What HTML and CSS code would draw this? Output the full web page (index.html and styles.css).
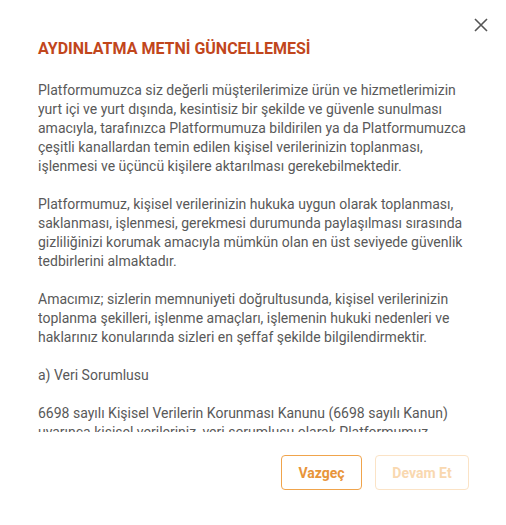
FILE: index.html
```html
<!DOCTYPE html>
<html lang="tr">
<head>
<meta charset="utf-8">
<title>Aydınlatma Metni</title>
<link rel="stylesheet" href="styles.css">
</head>
<body>
<div class="modal">
  <div class="modal-top">
    <button class="close" aria-label="Kapat">
      <svg width="14" height="14" viewBox="0 0 14 14"><path d="M1 1L13 13M13 1L1 13" stroke="#555" stroke-width="1.6" fill="none"/></svg>
    </button>
  </div>
  <h1 class="title">AYDINLATMA METNİ GÜNCELLEMESİ</h1>
  <div class="content">
    <p>Platformumuzca siz değerli müşterilerimize ürün ve hizmetlerimizin yurt içi ve yurt dışında, kesintisiz bir şekilde ve güvenle sunulması amacıyla, tarafınızca Platformumuza bildirilen ya da Platformumuzca çeşitli kanallardan temin edilen kişisel verilerinizin toplanması, işlenmesi ve üçüncü kişilere aktarılması gerekebilmektedir.</p>
    <p>Platformumuz, kişisel verilerinizin hukuka uygun olarak toplanması, saklanması, işlenmesi, gerekmesi durumunda paylaşılması sırasında gizliliğinizi korumak amacıyla mümkün olan en üst seviyede güvenlik tedbirlerini almaktadır.</p>
    <p>Amacımız; sizlerin memnuniyeti doğrultusunda, kişisel verilerinizin toplanma şekilleri, işlenme amaçları, işlemenin hukuki nedenleri ve haklarınız konularında sizleri en şeffaf şekilde bilgilendirmektir.</p>
    <p>a) Veri Sorumlusu</p>
    <p>6698 sayılı Kişisel Verilerin Korunması Kanunu (6698 sayılı Kanun) uyarınca kişisel verileriniz, veri sorumlusu olarak Platformumuz tarafından aşağıda açıklanan kapsamda işlenebilecektir.</p>
  </div>
  <div class="actions">
    <button class="btn btn-cancel">Vazgeç</button>
    <button class="btn btn-next" disabled>Devam Et</button>
  </div>
</div>
</body>
</html>
```

FILE: styles.css
```css
* { box-sizing: border-box; }
html, body { margin: 0; padding: 0; background: #fff; }
body { font-family: Roboto, "Noto Sans", sans-serif; }
.modal {
  width: 506px;
  height: 525px;
  display: flex;
  flex-direction: column;
  padding: 0 37px 0 38px;
}
.modal-top {
  display: flex;
  justify-content: flex-end;
  padding-top: 18px;
  margin-right: -19px;
  height: 39px;
}
.close {
  width: 14px;
  height: 14px;
  padding: 0;
  border: 0;
  background: none;
  display: flex;
}
.title {
  margin: 0;
  font-size: 16px;
  line-height: 20px;
  font-weight: 700;
  color: #c1461c;
}
.content {
  margin-top: 22px;
  height: 351px;
  overflow: hidden;
  font-size: 14px;
  line-height: 19px;
  color: #595959;
}
.content p { margin: 0 0 19px; }
.actions {
  display: flex;
  justify-content: flex-end;
  gap: 13px;
  margin-top: 23px;
}
.btn {
  height: 35px;
  border-radius: 4px;
  background: #fff;
  font-family: Roboto, sans-serif;
  font-size: 14px;
  font-weight: 700;
  padding: 0;
}
.btn-cancel {
  width: 81px;
  border: 1px solid #f0a44c;
  color: #e8953a;
}
.btn-next {
  width: 94px;
  border: 1px solid #fbe3c6;
  color: #f9d8b0;
}
```
